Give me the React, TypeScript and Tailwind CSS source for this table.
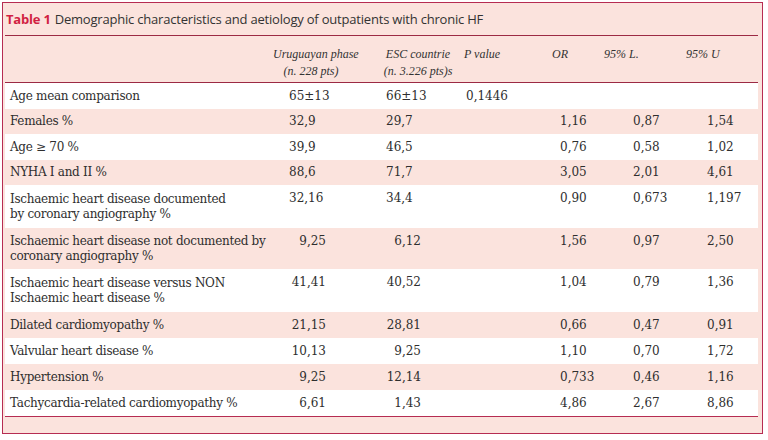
const rows: {
  label: string[]
  uy: string
  esc: string
  p?: string
  or?: string
  l?: string
  u?: string
  right?: boolean
  h: string
  white: boolean
}[] = [
  { label: ['Age mean comparison'], uy: '65±13', esc: '66±13', p: '0,1446', h: 'h-[26px]', white: true },
  { label: ['Females %'], uy: '32,9', esc: '29,7', or: '1,16', l: '0,87', u: '1,54', h: 'h-[25px]', white: false },
  { label: ['Age ≥ 70 %'], uy: '39,9', esc: '46,5', or: '0,76', l: '0,58', u: '1,02', h: 'h-[26px]', white: true },
  { label: ['NYHA I and II %'], uy: '88,6', esc: '71,7', or: '3,05', l: '2,01', u: '4,61', h: 'h-[25px]', white: false },
  {
    label: ['Ischaemic heart disease documented', 'by coronary angiography %'],
    uy: '32,16', esc: '34,4', or: '0,90', l: '0,673', u: '1,197', h: 'h-[43px]', white: true,
  },
  {
    label: ['Ischaemic heart disease not documented by', 'coronary angiography %'],
    uy: '9,25', esc: '6,12', or: '1,56', l: '0,97', u: '2,50', right: true, h: 'h-[41px]', white: false,
  },
  {
    label: ['Ischaemic heart disease versus NON', 'Ischaemic heart disease %'],
    uy: '41,41', esc: '40,52', or: '1,04', l: '0,79', u: '1,36', right: true, h: 'h-[43px]', white: true,
  },
  { label: ['Dilated cardiomyopathy %'], uy: '21,15', esc: '28,81', or: '0,66', l: '0,47', u: '0,91', right: true, h: 'h-[26px]', white: false },
  { label: ['Valvular heart disease %'], uy: '10,13', esc: '9,25', or: '1,10', l: '0,70', u: '1,72', right: true, h: 'h-[26px]', white: true },
  { label: ['Hypertension %'], uy: '9,25', esc: '12,14', or: '0,733', l: '0,46', u: '1,16', right: true, h: 'h-[26px]', white: false },
  { label: ['Tachycardia-related cardiomyopathy %'], uy: '6,61', esc: '1,43', or: '4,86', l: '2,67', u: '8,86', right: true, h: 'h-[26px]', white: true },
]

export default function App() {
  return (
    <div className="w-[768px] h-[440px] bg-white pt-[2px] pl-[2px]">
      <div className="w-[761px] h-[432px] border border-[#b62c52] bg-[#fbe3dd] pl-[2px] pr-[4px] flex flex-col">
        {/* title */}
        <div className="h-[32px] flex items-center pt-[1px] pl-[1px] text-[13px] text-[#333] font-['Open_Sans',sans-serif] tracking-[-0.2px]">
          <span className="font-bold text-[#d11f42] mr-[4px]">Table 1</span>
          Demographic characteristics and aetiology of outpatients with chronic HF
        </div>
        <div className="h-px bg-[#9c2a44]" />

        {/* header */}
        <div className="h-[46px] flex pt-[10px] font-['Liberation_Serif',serif] italic text-[12px] leading-[17px] text-[#333] whitespace-nowrap">
          <div className="w-[268px]" />
          <div className="w-[76px] text-center">
            <div>Uruguayan phase</div>
            <div>(n. 228 pts)</div>
          </div>
          <div className="w-[33px]" />
          <div className="w-[72px] text-center">
            <div>ESC countrie</div>
            <div>(n. 3.226 pts)s</div>
          </div>
          <div className="w-[10px]" />
          <div className="w-[88px]">P value</div>
          <div className="w-[52px]">OR</div>
          <div className="w-[82px]">95% L.</div>
          <div>95% U</div>
        </div>
        <div className="h-px bg-[#9c2a44]" />

        {/* body */}
        <div className="flex flex-col font-['DejaVu_Serif',serif] text-[12px] leading-[15px] text-[#2e2e2e]">
          {rows.map((r, i) => {
            const top = r.label.length > 1 ? 'self-start mt-[6px]' : ''
            return (
              <div key={i} className={`${r.h} flex items-center ${r.white ? 'bg-white' : ''}`}>
                <div className="w-[280px] pl-[5px] tracking-[-0.3px]">
                  {r.label.map((t, j) => (
                    <div key={j}>{t}</div>
                  ))}
                </div>
                <div className="w-[96px] self-stretch flex items-center">
                  <div className={`w-[37px] ml-[4px] ${r.right ? 'text-right' : 'text-left'} ${top}`}>{r.uy}</div>
                </div>
                <div className="w-[85px] self-stretch flex items-center">
                  <div className={`w-[35px] ml-[5px] ${r.right ? 'text-right' : 'text-left'} ${top}`}>{r.esc}</div>
                </div>
                <div className={`w-[94px] ${top}`}>{r.p}</div>
                <div className={`w-[73px] ${top}`}>{r.or}</div>
                <div className={`w-[74px] ${top}`}>{r.l}</div>
                <div className={top}>{r.u}</div>
              </div>
            )
          })}
        </div>
        <div className="h-px bg-[#b62c52]" />
      </div>
    </div>
  )
}
